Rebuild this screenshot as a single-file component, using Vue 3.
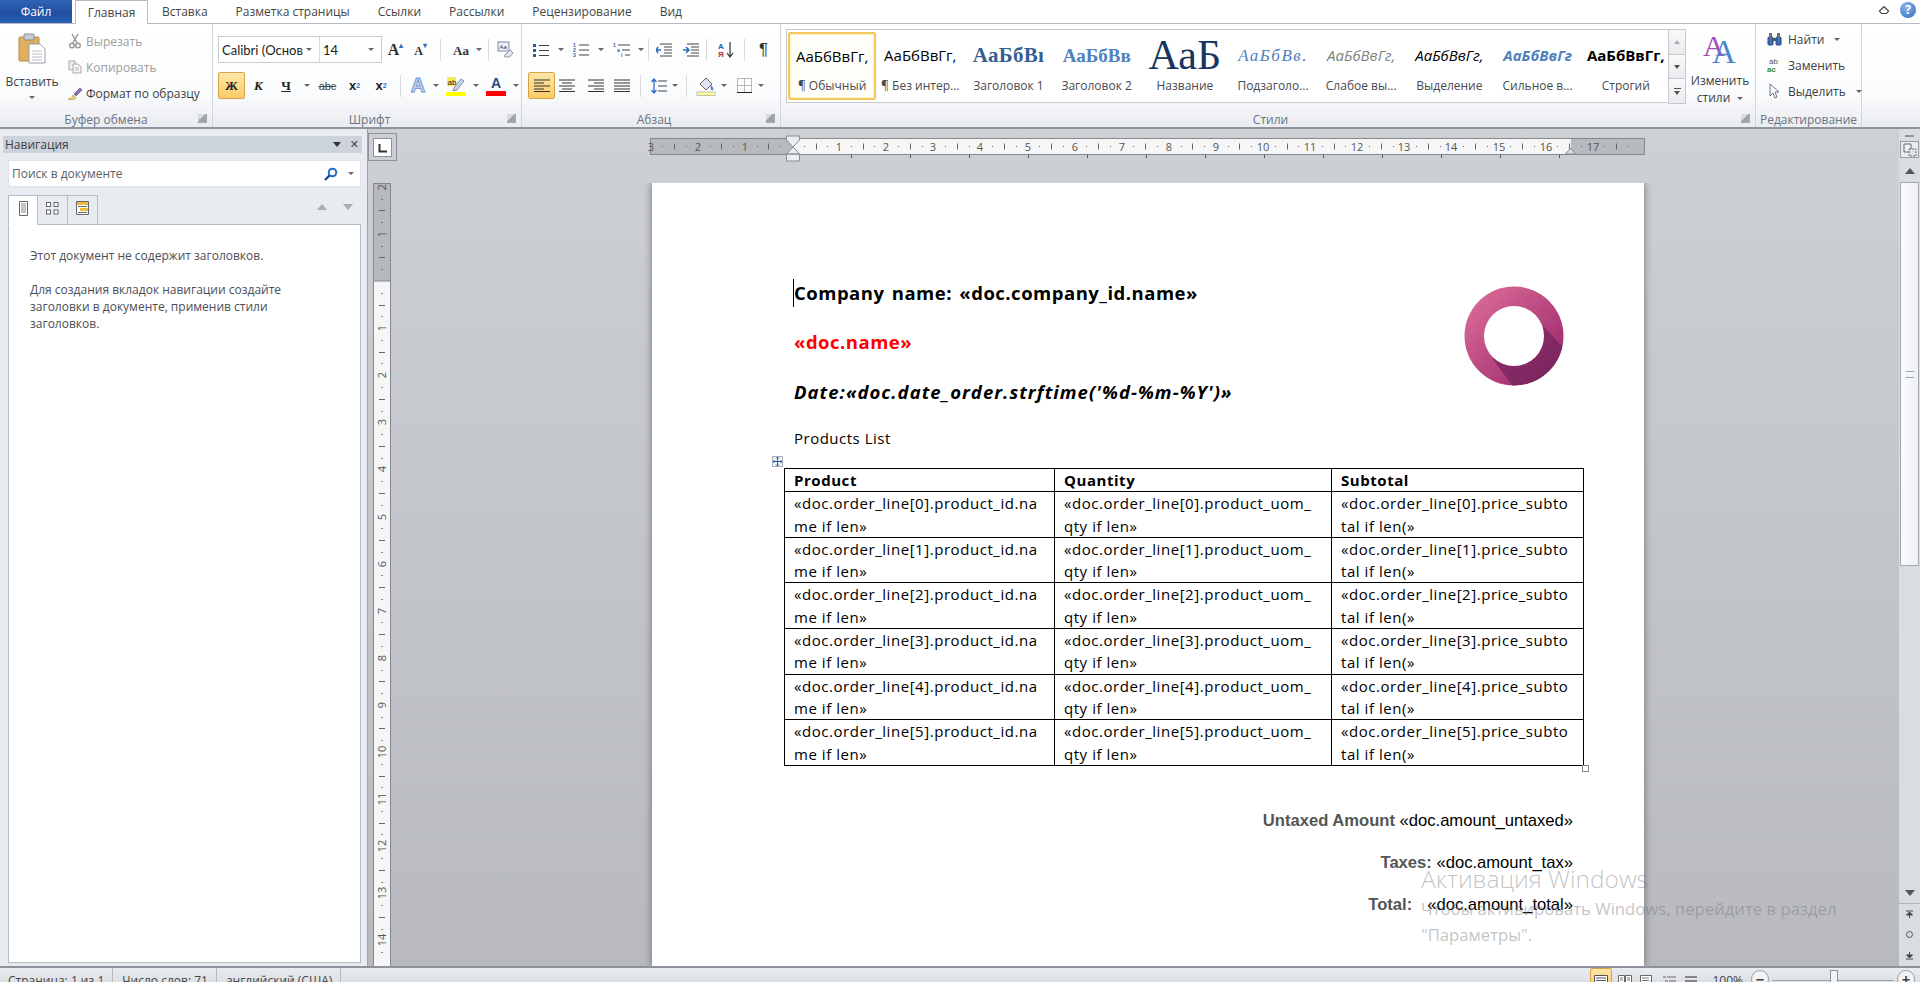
<template>
  <div class="word">
    <!-- вкладки -->
    <div class="tabs">
      <div class="file-tab">Файл</div>
      <div class="tab active">Главная</div>
      <div class="tab" v-for="t in tabs" :key="t">{{ t }}</div>
      <div class="tabs-right">
        <svg width="12" height="10" viewBox="0 0 12 10"><path d="M1.5 6 6 1.5 10.5 6 8.5 8.5h-5z" fill="none" stroke="#444" stroke-width="1.2"/></svg>
        <div class="help">?</div>
      </div>
    </div>

    <!-- лента -->
    <div class="ribbon">
      <div class="group g-clip">
        <div class="clip-body">
          <div class="paste">
            <svg width="28" height="31" viewBox="0 0 28 31">
              <rect x="1" y="4" width="20" height="24" rx="1" fill="#e0ae5f" stroke="#b58a48"/>
              <rect x="6" y="1" width="10" height="6" rx="1" fill="#c9ccd2" stroke="#8b8f96"/>
              <path d="M11 11h11l5 5v14H11z" fill="#fff" stroke="#9aa0a8"/>
              <path d="M14 18h10M14 21h10M14 24h10M14 27h10" stroke="#b7bcc4"/>
            </svg>
            <span class="paste-label">Вставить</span>
            <i class="arrow"></i>
          </div>
          <div class="clip-list">
            <div class="clip-item off">
              <svg width="14" height="16" viewBox="0 0 14 16"><path d="M4 1l5 9M10 1L5 10" stroke="#9a9a9a" stroke-width="1.5"/><circle cx="4" cy="12.5" r="2.3" fill="none" stroke="#9a9a9a" stroke-width="1.4"/><circle cx="10" cy="12.5" r="2.3" fill="none" stroke="#9a9a9a" stroke-width="1.4"/></svg>
              Вырезать
            </div>
            <div class="clip-item off">
              <svg width="14" height="14" viewBox="0 0 14 14"><path d="M1 1h6v9H1z" fill="#eee" stroke="#aaa"/><path d="M5 4h5l3 3v6H5z" fill="#f4f4f4" stroke="#aaa"/><path d="M7 8h4M7 10h4" stroke="#bbb"/></svg>
              Копировать
            </div>
            <div class="clip-item">
              <svg width="16" height="15" viewBox="0 0 16 15"><path d="M1 13c3 0 4-1 5-4l3 3c-2 2-5 2-8 1z" fill="#efd27c" stroke="#b8933f" stroke-width=".7"/><path d="M7 8l6-6 2 2-6 6z" fill="#8a72b5" stroke="#5f4a8a" stroke-width=".7"/></svg>
              Формат по образцу
            </div>
          </div>
        </div>
        <div class="group-label">Буфер обмена<i class="launcher"></i></div>
      </div>

      <div class="group g-font">
        <div class="rows">
          <div class="row row-top">
            <div class="combo">
              <div class="combo-name">Calibri (Основ<i class="arrow"></i></div>
              <div class="combo-size">14<i class="arrow"></i></div>
            </div>
            <div class="cell w25 glyph-serif">A<sup class="up">▴</sup></div>
            <div class="cell w25 glyph-serif small">A<sup class="down">▾</sup></div>
            <div class="sep gap-l"></div>
            <div class="cell w24 glyph-serif aa">Aa</div><i class="arrow arrow-m"></i>
            <div class="sep gap-r"></div>
            <div class="cell w32">
              <svg width="17" height="17" viewBox="0 0 17 17"><rect x="1" y="1" width="11" height="9" fill="#eef2f8" stroke="#7f8aa0"/><text x="2.5" y="8" font-size="6" font-family="Liberation Sans" fill="#334">Aa</text><path d="M7 15l6-6 3 3-3.5 4H9z" fill="#e3e7ef" stroke="#8a93a5"/></svg>
            </div>
          </div>
          <div class="row row-bot">
            <div class="cell w27 on glyph-b">Ж</div>
            <div class="cell w27 glyph-b ital">К</div>
            <div class="cell w28 glyph-b und">Ч</div><i class="arrow arrow-s"></i>
            <div class="cell w27 strike">abc</div>
            <div class="cell w27 glyph-b sm">x<sub>2</sub></div>
            <div class="cell w26 glyph-b sm">x<sup>2</sup></div>
            <div class="sep gap-x"></div>
            <div class="cell w22 effect">A</div><i class="arrow arrow-s"></i>
            <div class="cell w26 col">
              <svg width="20" height="20" viewBox="0 0 20 20"><rect x="1" y="1" width="9" height="9" fill="#f6ea5c"/><text x="1.5" y="8.5" font-size="8" font-family="Liberation Sans" fill="#222">ab</text><path d="M8 12l7-9 3 2-7 9-4 1z" fill="#c7d3e6" stroke="#66799a" stroke-width=".8"/><rect x="0" y="16" width="20" height="4" fill="#ffff00"/></svg>
            </div><i class="arrow arrow-s"></i>
            <div class="cell w26 col">
              <span class="font-a">A</span><i class="red-bar"></i>
            </div><i class="arrow arrow-s"></i>
          </div>
        </div>
        <div class="group-label">Шрифт<i class="launcher"></i></div>
      </div>

      <div class="group g-para">
        <div class="rows">
          <div class="row row-top para-top">
            <div class="cell w26">
              <svg width="16" height="14" viewBox="0 0 16 14"><g fill="#2a5caa"><rect x="0" y="1" width="3" height="3"/><rect x="0" y="6" width="3" height="3"/><rect x="0" y="11" width="3" height="3"/></g><path d="M6 2.5h10M6 7.5h10M6 12.5h10" stroke="#444"/></svg>
            </div><i class="arrow arrow-s"></i>
            <div class="cell w26">
              <svg width="16" height="15" viewBox="0 0 16 15"><g font-size="5" font-family="Liberation Sans" font-weight="700" fill="#2a5caa"><text x="0" y="5">1</text><text x="0" y="10">2</text><text x="0" y="15">3</text></g><path d="M6 3h10M6 8h10M6 13h10" stroke="#444"/></svg>
            </div><i class="arrow arrow-s"></i>
            <div class="cell w26">
              <svg width="17" height="15" viewBox="0 0 17 15"><g font-size="5" font-family="Liberation Sans" font-weight="700" fill="#2a5caa"><text x="0" y="5">1</text><text x="4" y="10">a</text><text x="8" y="15">i</text></g><path d="M5 3h12M9 8h8M12 13h5" stroke="#444"/></svg>
            </div><i class="arrow arrow-s"></i>
            <div class="sep gap-p1"></div>
            <div class="cell w27">
              <svg width="16" height="14" viewBox="0 0 16 14"><path d="M4 1h12M8 4h8M8 7h8M8 10h8M4 13h12" stroke="#444"/><path d="M5 7H0m2-3L0 7l2 3" stroke="#2a6bc4" stroke-width="1.5" fill="none"/></svg>
            </div>
            <div class="cell w27">
              <svg width="16" height="14" viewBox="0 0 16 14"><path d="M4 1h12M8 4h8M8 7h8M8 10h8M4 13h12" stroke="#444"/><path d="M0 7h5M3 4l3 3-3 3" stroke="#2a6bc4" stroke-width="1.5" fill="none"/></svg>
            </div>
            <div class="sep gap-p2"></div>
            <div class="cell w37">
              <svg width="16" height="17" viewBox="0 0 16 17"><text x="0" y="7.5" font-size="8" font-weight="700" font-family="Liberation Sans" fill="#2a5caa">А</text><text x="0" y="16" font-size="8" font-weight="700" font-family="Liberation Sans" fill="#a33">Я</text><path d="M12 1v14M9 12l3 4 3-4" stroke="#333" stroke-width="1.2" fill="none"/></svg>
            </div>
            <div class="sep"></div>
            <div class="cell w37 pilcrow">¶</div>
          </div>
          <div class="row row-bot para-bot">
            <div class="cell w27 on">
              <svg width="16" height="13" viewBox="0 0 16 13"><path d="M0 1h16M0 4h10M0 7h16M0 10h10M0 12.5h16" stroke="#333"/></svg>
            </div>
            <div class="cell w24">
              <svg width="16" height="13" viewBox="0 0 16 13"><path d="M0 1h16M3 4h10M0 7h16M3 10h10M0 12.5h16" stroke="#333"/></svg>
            </div>
            <div class="cell w34">
              <svg width="16" height="13" viewBox="0 0 16 13"><path d="M0 1h16M6 4h10M0 7h16M6 10h10M0 12.5h16" stroke="#333"/></svg>
            </div>
            <div class="cell w18">
              <svg width="16" height="13" viewBox="0 0 16 13"><path d="M0 1h16M0 4h16M0 7h16M0 10h16M0 12.5h16" stroke="#333"/></svg>
            </div>
            <div class="sep gap-p3"></div>
            <div class="cell w24">
              <svg width="16" height="16" viewBox="0 0 16 16"><path d="M7 3h9M7 8h9M7 13h9" stroke="#444"/><path d="M3 1v14M.5 4 3 1l2.500 3M.5 12 3 15l2.500-3" stroke="#2a6bc4" stroke-width="1.300" fill="none"/></svg>
            </div><i class="arrow a-spacing"></i>
            <div class="sep gap-p4"></div>
            <div class="cell w26">
              <svg width="20" height="20" viewBox="0 0 20 20"><path d="M4 8l6-6 6 6-6 6z" fill="#dfe6f0" stroke="#666"/><path d="M15 9c2 2 3 4 2 5s-3 0-2-5z" fill="#4a80c8"/><rect x="1" y="16" width="18" height="3.500" fill="#ffff9a" stroke="#999" stroke-width=".6"/></svg>
            </div><i class="arrow a-shade"></i>
            <div class="cell w26 b-cell">
              <svg width="15" height="15" viewBox="0 0 15 15"><path d="M.5.5h14v14H.5zM7.500.5v14M.5 7.500h14" fill="none" stroke="#777" stroke-dasharray="1 1"/><path d="M0 14.500h15" stroke="#222"/></svg>
            </div><i class="arrow a-border"></i>
          </div>
        </div>
        <div class="group-label">Абзац<i class="launcher"></i></div>
      </div>

      <div class="group g-styles">
        <div class="styles-body">
          <div class="gallery">
            <div class="style-item" v-for="(s, i) in styleItems" :key="s.label" :class="{ selected: i === 0 }">
              <div class="sample" :class="s.cls">{{ s.sample }}</div>
              <div class="style-label">{{ s.label }}</div>
            </div>
          </div>
          <div class="gallery-btns">
            <div class="g-btn"><i class="tri-g off"></i></div>
            <div class="g-btn"><i class="tri-g"></i></div>
            <div class="g-btn"><i class="bar-g"></i><i class="tri-g"></i></div>
          </div>
          <div class="change-styles">
            <svg width="34" height="32" viewBox="0 0 34 32">
              <text x="0" y="24" font-size="30" font-family="Liberation Serif" fill="#a64ab5">A</text>
              <text x="9" y="31" font-size="33" font-family="Liberation Serif" fill="#4f86d0">A</text>
            </svg>
            <span>Изменить</span>
            <span>стили<i class="arrow arrow-in"></i></span>
          </div>
        </div>
        <div class="group-label">Стили<i class="launcher"></i></div>
      </div>

      <div class="group g-edit">
        <div class="edit-list">
          <div class="edit-item">
            <svg width="15" height="14" viewBox="0 0 15 14"><rect x="1" y="5" width="5" height="8" rx="1" fill="#3f6fb0" stroke="#24467a"/><rect x="9" y="5" width="5" height="8" rx="1" fill="#3f6fb0" stroke="#24467a"/><rect x="2" y="1" width="3" height="5" fill="#6f6f6f"/><rect x="10" y="1" width="3" height="5" fill="#6f6f6f"/><rect x="6" y="6" width="3" height="3" fill="#555"/></svg>
            Найти<i class="arrow arrow-in"></i>
          </div>
          <div class="edit-item">
            <svg width="15" height="16" viewBox="0 0 15 16"><text x="2" y="7" font-size="8" font-family="Liberation Sans" fill="#555">ab</text><text x="0" y="15" font-size="8" font-weight="700" font-family="Liberation Sans" fill="#2f8a3f">ac</text></svg>
            Заменить
          </div>
          <div class="edit-item">
            <svg width="15" height="16" viewBox="0 0 15 16"><path d="M3 1v12l3-3 2 5 2-1-2-5h4z" fill="#fff" stroke="#6c7687"/></svg>
            Выделить<i class="arrow arrow-in"></i>
          </div>
        </div>
        <div class="group-label edit-label">Редактирование</div>
      </div>
    </div>

    <!-- основная часть -->
    <div class="main">
      <div class="nav">
        <div class="nav-title">
          <span>Навигация</span>
          <span class="nav-ctrl"><i class="tri-black"></i><b>✕</b></span>
        </div>
        <div class="nav-search">
          <span>Поиск в документе</span>
          <span class="nav-search-r">
            <svg width="14" height="14" viewBox="0 0 14 14"><circle cx="8.500" cy="5.500" r="3.800" fill="#fff" stroke="#2a6bc4" stroke-width="2"/><path d="M5.500 8.500 1 13" stroke="#1c4a8c" stroke-width="2.400"/></svg>
            <i class="arrow"></i>
          </span>
        </div>
        <div class="nav-tabs">
          <div class="nav-tab current">
            <svg width="9" height="15" viewBox="0 0 9 15"><path d="M.5.5h8v14h-8z" fill="#fff" stroke="#666"/><path d="M2 3h5M2 5h5M2 7h5M2 9h5M2 11h5" stroke="#888"/></svg>
          </div>
          <div class="nav-tab">
            <svg width="13" height="13" viewBox="0 0 13 13"><g fill="#fff" stroke="#666"><rect x=".5" y=".5" width="4" height="4"/><rect x="8" y=".5" width="4" height="4"/><rect x=".5" y="8" width="4" height="4"/><rect x="8" y="8" width="4" height="4"/></g></svg>
          </div>
          <div class="nav-tab">
            <svg width="13" height="14" viewBox="0 0 13 14"><path d="M.5.5h12v13H.5z" fill="#fff" stroke="#666"/><rect x="1" y="1" width="11" height="3" fill="#f0b83c"/><rect x="4" y="7" width="8" height="3" fill="#f0b83c"/><path d="M2 5.500h9M2 11.500h9" stroke="#666"/></svg>
          </div>
          <div class="nav-arrows"><i class="tri-up"></i><i class="tri-down"></i></div>
        </div>
        <div class="nav-content">
          <p>Этот документ не содержит заголовков.</p>
          <p class="spaced">Для создания вкладок навигации создайте заголовки в документе, применив стили заголовков.</p>
        </div>
      </div>

      <div class="workspace">
        <div class="doc-col">
          <div class="ruler-row">
            <div class="tab-box"><div class="tab-inner"><svg width="9" height="9" viewBox="0 0 9 9"><path d="M1.500 0v7.500H9" fill="none" stroke="#333" stroke-width="2"/></svg></div></div>
            <svg class="h-ruler" width="996" height="30" viewBox="0 0 996 30">
              <rect x=".5" y="5.500" width="994" height="16" fill="#b6b9be" stroke="#85888d"/>
              <rect x="142" y="6" width="779" height="15" fill="#f6f6f7"/>
              <g v-for="m in hMarks" :key="m.x">
                <text v-if="m.label" :x="m.x" y="18" class="r-num" text-anchor="middle">{{ m.label }}</text>
                <rect v-else-if="m.big" :x="m.x" y="10.500" width="1" height="6" fill="#666"/>
                <rect v-else :x="m.x" y="13" width="1" height="1" fill="#666"/>
              </g>
              <rect v-for="x in tabStops" :key="x" :x="x" y="22" width="1" height="3" fill="#555"/>
              <path d="M136.500 3h13v4l-6.500 7-6.500-7zM136.500 21l6.500-7 6.500 7v-0zM136.500 21h13v7h-13z" fill="#eceef0" stroke="#8a8d92"/>
              <path d="M915.500 21l5-6 5 6z" fill="#d9dbde" stroke="#8a8d92"/>
            </svg>
          </div>
          <div class="doc-body">
            <svg class="v-ruler" width="18" height="784" viewBox="0 0 18 784">
              <rect x=".5" y=".5" width="17" height="783" fill="#f6f6f7" stroke="#85888d"/>
              <rect x=".5" y=".5" width="17" height="97.500" fill="#b6b9be" stroke="#85888d"/>
              <g v-for="m in vMarks" :key="m.y">
                <text v-if="m.label" class="r-num" text-anchor="middle" :transform="`translate(13 ${m.y}) rotate(-90)`">{{ m.label }}</text>
                <rect v-else-if="m.big" x="6" :y="m.y" width="6" height="1" fill="#666"/>
                <rect v-else x="8.500" :y="m.y" width="1.500" height="1" fill="#666"/>
              </g>
            </svg>
            <div class="page">
              <svg class="logo" width="100" height="100" viewBox="-50 -50 100 100">
                <defs>
                  <linearGradient id="ring" x1="0" y1="0" x2="1" y2="1">
                    <stop offset="0.1" stop-color="#d86a96"/>
                    <stop offset="0.85" stop-color="#a02c6e"/>
                  </linearGradient>
                  <linearGradient id="ringShade" x1="0" y1="0" x2="1" y2="1">
                    <stop offset="0" stop-color="#90306c"/>
                    <stop offset="1" stop-color="#6f1f56"/>
                  </linearGradient>
                  <clipPath id="ringClip"><circle r="49.500"/></clipPath>
                </defs>
                <circle r="49.500" fill="url(#ring)"/>
                <polygon clip-path="url(#ringClip)" points="30,-9 64,27 18,76 -22,22" fill="url(#ringShade)"/>
                <circle r="30" fill="#fff"/>
              </svg>
              <p class="line line-1"><i class="caret"></i>Company name: «doc.company_id.name»</p>
              <p class="line line-2">«doc.name»</p>
              <p class="line line-3">Date:«doc.date_order.strftime('%d-%m-%Y')»</p>
              <p class="products">Products List</p>
              <div class="table-wrap">
                <div class="move-handle">
                  <svg width="9" height="9" viewBox="0 0 9 9"><path d="M4.500 0v9M0 4.500h9" stroke="#2a5caa"/><path d="M3 1.500 4.500 0 6 1.500M3 7.500 4.500 9 6 7.500M1.500 3 0 4.500 1.500 6M7.500 3 9 4.500 7.500 6" fill="none" stroke="#2a5caa"/></svg>
                </div>
                <table class="orders">
                  <colgroup><col class="c1"><col class="c2"><col class="c3"></colgroup>
                  <thead>
                    <tr><th>Product</th><th>Quantity</th><th>Subtotal</th></tr>
                  </thead>
                  <tbody>
                    <tr v-for="i in 6" :key="i">
                      <td>«doc.order_line[{{ i - 1 }}].product_id.na<br>me if len»</td>
                      <td>«doc.order_line[{{ i - 1 }}].product_uom_<br>qty if len»</td>
                      <td>«doc.order_line[{{ i - 1 }}].price_subto<br>tal if len(»</td>
                    </tr>
                  </tbody>
                </table>
                <div class="resize-handle"></div>
              </div>
              <p class="amount first"><b>Untaxed Amount</b> «doc.amount_untaxed»</p>
              <p class="amount"><b>Taxes:</b> «doc.amount_tax»</p>
              <p class="amount"><b>Total:</b><span class="total-gap"></span>«doc.amount_total»</p>
            </div>
          </div>
        </div>
        <div class="vscroll">
          <i class="split-dash"></i>
          <div class="ruler-toggle">
            <svg width="14" height="14" viewBox="0 0 14 14"><path d="M1 1h7v8H1z" fill="#eef0f3" stroke="#666"/><path d="M6 6h7v7H6z" fill="#dfe3e9" stroke="#666" stroke-dasharray="2 1"/></svg>
          </div>
          <div class="sb-btn"><i class="tri-dark-up"></i></div>
          <div class="thumb"><i class="grip"></i></div>
          <div class="track"></div>
          <div class="sb-btn"><i class="tri-dark-down"></i></div>
          <div class="browse">
            <svg width="9" height="9" viewBox="0 0 9 9"><path d="M1 1h7M1.500 5 4.500 2l3 3zM4.500 5v3" fill="#444" stroke="#444"/></svg>
            <span class="dot"></span>
            <svg width="9" height="9" viewBox="0 0 9 9"><path d="M1 8h7M1.500 4l3 3 3-3zM4.500 4V1" fill="#444" stroke="#444"/></svg>
          </div>
        </div>
      </div>
    </div>

    <!-- строка состояния -->
    <div class="status">
      <span class="st-item">Страница: 1 из 1</span>
      <span class="st-item">Число слов: 71</span>
      <span class="st-item">английский (США)</span>
      <div class="st-right">
        <div class="view on"><svg width="14" height="12" viewBox="0 0 14 12"><path d="M.5.5h13v11H.5z" fill="#fff" stroke="#555"/><path d="M2 3h10M2 5.500h10M2 8h10" stroke="#555"/></svg></div>
        <div class="view"><svg width="14" height="12" viewBox="0 0 14 12"><path d="M.5.5h6v11h-6zM7.500.5h6v11h-6z" fill="#fff" stroke="#666"/><path d="M2 3h3M2 5h3M9 3h3M9 5h3" stroke="#777"/></svg></div>
        <div class="view"><svg width="14" height="12" viewBox="0 0 14 12"><path d="M.5.5h11v11H.5z" fill="#fff" stroke="#666"/><path d="M2 3h7M2 5.500h7" stroke="#777"/><circle cx="11" cy="9" r="2.500" fill="#4a9a5a"/></svg></div>
        <div class="view"><svg width="14" height="12" viewBox="0 0 14 12"><path d="M1 2h3M5 2h9M3 6h3M7 6h7M5 10h2M8 10h6" stroke="#666"/></svg></div>
        <div class="view"><svg width="14" height="12" viewBox="0 0 14 12"><path d="M1 2h12M1 6h12M1 10h12" stroke="#666" stroke-width="1.400"/></svg></div>
        <span class="zoom-val">100%</span>
        <div class="zoom-btn">−</div>
        <div class="slider"><i class="slider-thumb"></i></div>
        <div class="zoom-btn">+</div>
      </div>
    </div>

    <!-- водяной знак активации -->
    <div class="activate">
      <div class="a-title">Активация Windows</div>
      <div class="a-text">Чтобы активировать Windows, перейдите в раздел</div>
      <div class="a-text">"Параметры".</div>
    </div>
  </div>
</template>

<script setup>
const tabs = ['Вставка', 'Разметка страницы', 'Ссылки', 'Рассылки', 'Рецензирование', 'Вид']

const styleItems = [
  { label: '¶ Обычный', sample: 'АаБбВвГг,', cls: 's-normal' },
  { label: '¶ Без интер...', sample: 'АаБбВвГг,', cls: 's-normal' },
  { label: 'Заголовок 1', sample: 'АаБбВı', cls: 's-h1' },
  { label: 'Заголовок 2', sample: 'АаБбВв', cls: 's-h2' },
  { label: 'Название', sample: 'АаБ', cls: 's-title' },
  { label: 'Подзаголо...', sample: 'АаБбВв.', cls: 's-sub' },
  { label: 'Слабое вы...', sample: 'АаБбВвГг,', cls: 's-weak' },
  { label: 'Выделение', sample: 'АаБбВвГг,', cls: 's-em' },
  { label: 'Сильное в...', sample: 'АаБбВвГг', cls: 's-strong-em' },
  { label: 'Строгий', sample: 'АаБбВвГг,', cls: 's-strong' }
]

// шаг линейки — один сантиметр на экране
const CM = 47.1
const ZERO_X = 142
const ZERO_Y = 98

function buildMarks(from, to, zero) {
  const marks = []
  for (let k = from; k <= to; k++) {
    const pos = zero + CM * k
    if (k !== 0) marks.push({ pos, label: String(Math.abs(k)) })
    marks.push({ pos: pos + CM / 4, dot: true })
    marks.push({ pos: pos + CM / 2, big: true })
    marks.push({ pos: pos + (CM * 3) / 4, dot: true })
  }
  return marks
}

const hMarks = buildMarks(-3, 17, ZERO_X).map((m) => ({ ...m, x: Math.round(m.pos) }))
const vMarks = buildMarks(-2, 14, ZERO_Y)
  .filter((m) => m.pos < 780)
  .map((m) => ({ ...m, y: Math.round(m.pos) }))

// позиции табуляции по умолчанию
const tabStops = []
for (let x = ZERO_X + 59; x < 915; x += 59) tabStops.push(x)
</script>

<style>
html, body { margin: 0; padding: 0; overflow: hidden; }
</style>

<style scoped>
.word {
  height: 982px;
  width: 1920px;
  display: flex;
  flex-direction: column;
  position: relative;
  overflow: hidden;
  font-family: "Open Sans", "Noto Sans", sans-serif;
  font-size: 12px;
  color: #3c3f45;
  background: #fff;
}
i { display: block; font-style: normal; }

/* вкладки */
.tabs { height: 23px; display: flex; align-items: stretch; flex: none; background: #fff; position: relative; }
.file-tab {
  width: 72px; margin-right: 3px;
  background: linear-gradient(#2f63b4, #1f4f9f 60%, #2a63b8);
  color: #fff; display: flex; align-items: center; justify-content: center;
}
.tab { padding: 0 14px; display: flex; align-items: center; color: #444; }
.tab.active {
  padding: 0 13px; width: 73px; box-sizing: border-box; justify-content: center;
  background: #fff; border: 1px solid #b8bcc2; border-bottom: none;
  margin-right: 0; height: 24px; position: relative; z-index: 1;
}
.tabs-right { margin-left: auto; display: flex; align-items: center; gap: 10px; padding: 0 4px 4px 0; }
.help {
  width: 16px; height: 16px; border-radius: 50%;
  background: radial-gradient(circle at 40% 30%, #8db4ea, #2f6bc4);
  color: #fff; font-weight: 700; font-size: 12px; line-height: 16px; text-align: center;
}

/* лента */
.ribbon {
  height: 106px; flex: none; display: flex; box-sizing: border-box;
  border-top: 1px solid #b8bcc2; border-bottom: 2px solid #8f939a;
  background: linear-gradient(#fff, #fbfcfd 65%, #e9ecf0);
}
.group { position: relative; display: flex; flex-direction: column; border-right: 1px solid #d2d5da; box-sizing: border-box; flex: none; }
.g-clip { width: 213px; }
.g-font { width: 309px; padding-left: 5px; }
.g-para { width: 259px; padding-left: 6px; }
.g-styles { width: 975px; padding-left: 5px; }
.g-edit { width: 106px; }
.group-label {
  height: 16px; flex: none; margin-top: auto; display: flex; align-items: center; justify-content: center;
  color: #6a7482; box-sizing: border-box;
}
.launcher {
  position: absolute; right: 5px; bottom: 4px; width: 9px; height: 9px;
  border-right: 2px solid #a3a8af; border-bottom: 2px solid #a3a8af;
  box-sizing: border-box; background: linear-gradient(135deg, #d7dade 50%, #9da2a9 50%);
}
.arrow { width: 0; height: 0; border: 3px solid transparent; border-top: 3px solid #666; border-bottom: none; flex: none; }
.arrow-s { width: 0; margin: 0 4px; }
.arrow-m { margin: 0 4px 0 3px; }
.arrow-in { display: inline-block; margin-left: 7px; vertical-align: middle; }
.a-spacing { margin-left: 1px; }
.a-shade { margin-left: 2px; }
.a-border { margin-left: 1px; }
.b-cell { margin-left: 4px; }
.sep { width: 1px; height: 22px; background: #d8dade; flex: none; }

.clip-body { display: flex; flex: 1; min-height: 0; }
.paste { width: 64px; display: flex; flex-direction: column; align-items: center; padding-top: 9px; box-sizing: border-box; flex: none; }
.paste-label { margin-top: 9px; line-height: 17px; }
.paste .arrow { margin-top: 6px; }
.clip-list { padding: 4px 0 0 3px; display: flex; flex-direction: column; gap: 0; }
.clip-item { height: 26px; display: flex; align-items: center; gap: 3px; white-space: nowrap; flex: none; }
.clip-item svg { width: 16px; flex: none; }
.clip-item.off { color: #a0a0a0; }

.rows { flex: 1; }
.row { display: flex; align-items: center; }
.row-top { height: 27px; margin-top: 12px; }
.row-bot { height: 27px; margin-top: 9px; }
.combo { display: flex; width: 164px; height: 27px; box-sizing: border-box; border: 1px solid #c9ccd1; background: #fff; flex: none; margin-right: 1px; }
.combo-name, .combo-size { display: flex; align-items: center; justify-content: space-between; padding: 0 7px 0 3px; color: #222; box-sizing: border-box; font-family: "Lato", sans-serif; font-size: 13px; }
.combo-name { width: 101px; border-right: 1px solid #d7d9dd; }
.combo-size { flex: 1; }
.cell { display: flex; align-items: center; justify-content: center; height: 27px; flex: none; box-sizing: border-box; }
.w18 { width: 18px; } .w22 { width: 22px; } .w24 { width: 24px; } .w25 { width: 25px; } .w26 { width: 26px; }
.w27 { width: 27px; } .w28 { width: 28px; } .w32 { width: 32px; } .w34 { width: 34px; } .w37 { width: 37px; }
.on { background: linear-gradient(#fde7a8, #fbcb66); border: 1px solid #d7a44a; border-radius: 2px; }
.glyph-serif { font-family: "Liberation Serif", serif; font-weight: 700; font-size: 16px; color: #333; align-items: flex-end; padding-bottom: 4px; }
.glyph-serif.small { font-size: 12px; }
.glyph-serif.aa { font-size: 13px; }
.glyph-serif sup { font-size: 8px; line-height: 1; align-self: flex-start; margin-top: 6px; color: #3b6fb5; }
.gap-l { margin: 0 8px 0 7px; }
.gap-r { margin: 0 0 0 2px; }
.glyph-b { font-family: "Liberation Serif", serif; font-weight: 700; font-size: 13px; color: #222; }
.ital { font-style: italic; }
.und { text-decoration: underline; }
.strike { text-decoration: line-through; font-size: 11px; font-family: "Liberation Sans", sans-serif; color: #444; }
.sm { font-family: "Liberation Sans", sans-serif; }
.sm sub, .sm sup { font-size: 7px; color: #3b6fb5; }
.gap-x { margin: 0 6px 0 6px; }
.effect { font-family: "Liberation Sans", sans-serif; font-weight: 700; font-size: 20px; color: #c9dbf3; -webkit-text-stroke: 1px #6d96cf; }
.col { flex-direction: column; }
.font-a { font-family: "Liberation Sans", sans-serif; font-weight: 700; font-size: 14px; line-height: 16px; color: #2a4a85; }
.red-bar { width: 20px; height: 5px; background: #f00; }
.para-top { gap: 0; }
.gap-p1 { margin: 0 1px 0 0; }
.gap-p2 { margin: 0 0 0 2px; }
.pilcrow { font-size: 17px; font-family: "Liberation Sans", sans-serif; color: #333; }
.gap-p3 { margin: 0 6px 0 9px; }
.gap-p4 { margin: 0 6px 0 8px; }

/* стили */
.styles-body { display: flex; flex: 1; min-height: 0; }
.gallery {
  width: 882px; height: 74px; box-sizing: border-box; margin-top: 5px;
  border: 1px solid #c6c9ce; border-right: none; background: #fff;
  display: grid; grid-template-columns: repeat(10, 88.2px); padding: 2px 0 0 1px;
  flex: none;
}
.style-item { height: 68px; overflow: hidden; text-align: center; box-sizing: border-box; }
.style-item.selected { border: 2px solid #f3c85c; border-radius: 2px; box-shadow: inset 0 0 0 1px #fff3c8; background: #fffef8; }
.sample { height: 45px; line-height: 47px; white-space: nowrap; overflow: hidden; color: #000; margin: 0 5px; }
.style-label { line-height: 18px; color: #474a50; white-space: nowrap; }
.selected .sample { margin: 0 3px; height: 43px; line-height: 45px; }
.s-normal { font-family: "Open Sans", sans-serif; font-size: 15px; }
.s-h1 { font-family: "Liberation Serif", serif; font-weight: 700; font-size: 21px; color: #365f91; letter-spacing: .3px; }
.s-h2 { font-family: "Liberation Serif", serif; font-weight: 700; font-size: 19px; color: #4f81bd; }
.s-title { font-family: "Liberation Serif", serif; font-size: 42px; color: #17365d; }
.s-sub { font-family: "Liberation Serif", serif; font-style: italic; font-size: 17px; color: #4f81bd; letter-spacing: 1.500px; }
.s-weak { font-family: "Open Sans", sans-serif; font-style: italic; font-size: 15px; color: #808080; }
.s-em { font-family: "Open Sans", sans-serif; font-style: italic; font-size: 15px; color: #000; }
.s-strong-em { font-family: "Open Sans", sans-serif; font-style: italic; font-weight: 700; font-size: 15px; color: #4f81bd; }
.s-strong { font-family: "Open Sans", sans-serif; font-weight: 700; font-size: 15px; color: #000; }
.gallery-btns { width: 18px; margin-top: 5px; display: flex; flex-direction: column; height: 74px; flex: none; }
.g-btn { flex: 1; border: 1px solid #c6c9ce; margin-bottom: -1px; display: flex; flex-direction: column; gap: 2px; align-items: center; justify-content: center; background: linear-gradient(#f8f9fa, #e9ebee); }
.tri-g { width: 0; height: 0; border: 3px solid transparent; border-top: 4px solid #555; border-bottom: none; }
.tri-g.off { border-top: none; border-bottom: 4px solid #a9adb3; }
.bar-g { width: 7px; height: 1px; background: #555; }
.change-styles { width: 68px; display: flex; flex-direction: column; align-items: center; padding-top: 8px; box-sizing: border-box; line-height: 17px; flex: none; }
.change-styles span:first-of-type { margin-top: 8px; }

.edit-list { padding: 2px 0 0 11px; }
.edit-item { height: 26px; display: flex; align-items: center; gap: 6px; color: #3c3f45; white-space: nowrap; }
.edit-item svg { width: 15px; flex: none; }
.edit-item .arrow-in { margin-left: 4px; }
.edit-label { white-space: nowrap; }

/* основная часть */
.main { flex: 1; min-height: 0; display: flex; overflow: hidden; }
.nav { width: 368px; flex: none; background: #e8ebf0; border-right: 1px solid #9ea3aa; box-sizing: border-box; padding: 7px 6px 3px 3px; display: flex; flex-direction: column; }
.nav-title { height: 17px; background: #cdd3da; display: flex; align-items: center; justify-content: space-between; padding: 0 3px 0 2px; color: #3c3f45; flex: none; margin-right: -1px; }
.nav-ctrl { display: flex; align-items: center; gap: 9px; }
.nav-ctrl b { font-size: 11px; color: #444; font-family: "DejaVu Sans", sans-serif; }
.tri-black { width: 0; height: 0; border: 4px solid transparent; border-top: 5px solid #333; border-bottom: none; }
.nav-search { height: 27px; margin: 7px 0 0 5px; background: #fff; border: 1px solid #dfe2e7; box-sizing: border-box; display: flex; align-items: center; justify-content: space-between; padding: 0 6px 0 3px; color: #5c5f66; flex: none; }
.nav-search-r { display: flex; align-items: center; gap: 10px; }
.nav-tabs { height: 30px; margin: 8px 0 0 5px; display: flex; flex: none; margin-bottom: -1px; position: relative; z-index: 1; }
.nav-tab { width: 30px; height: 30px; box-sizing: border-box; border: 1px solid #b5bbc3; border-left: none; border-bottom: 1px solid #b5bbc3; display: flex; align-items: center; justify-content: center; padding-bottom: 4px; }
.nav-tab.current { background: #fff; border-left: 1px solid #b5bbc3; border-bottom-color: #fff; }
.nav-arrows { margin-left: auto; display: flex; gap: 16px; align-items: center; padding: 0 8px 6px 0; }
.tri-up { width: 0; height: 0; border: 5px solid transparent; border-bottom: 6px solid #a9adb3; border-top: none; }
.tri-down { width: 0; height: 0; border: 5px solid transparent; border-top: 6px solid #a9adb3; border-bottom: none; }
.nav-content { flex: 1; margin-left: 5px; background: #fff; border: 1px solid #b5bbc3; padding: 22px 60px 0 21px; box-sizing: border-box; color: #4b4e55; line-height: 17px; }
.nav-content p { margin: 0; }
.nav-content .spaced { margin-top: 17px; }

.workspace { flex: 1; display: flex; min-width: 0; background: linear-gradient(#cdd0d5, #b8babf); }
.doc-col { flex: 1; min-width: 0; display: flex; flex-direction: column; }
.ruler-row { height: 54px; flex: none; display: flex; align-items: flex-start; padding-top: 4px; box-sizing: border-box; }
.tab-box { width: 29px; height: 28px; box-sizing: border-box; border: 1px solid #8f9399; display: flex; align-items: center; justify-content: center; flex: none; }
.tab-inner { width: 19px; height: 19px; box-sizing: border-box; border: 1px solid #8f9399; background: #fff; display: flex; align-items: center; justify-content: center; padding-top: 2px; }
.h-ruler { margin-left: 253px; flex: none; overflow: visible; }
.r-num { font-family: "Open Sans", sans-serif; font-size: 11px; fill: #555; }
.doc-body { flex: 1; min-height: 0; display: flex; overflow: hidden; }
.v-ruler { margin-left: 5px; flex: none; }
.page {
  position: relative; width: 992px; margin-left: 261px; flex: none; background: #fff;
  box-shadow: 0 0 7px 1px rgba(70, 72, 78, .55);
  box-sizing: border-box; padding: 96px 71px 0 142px;
  color: #000;
  font-family: "Open Sans", sans-serif;
}
.logo { position: absolute; left: 812px; top: 103px; }
.page p { margin: 0; }
.line { font-weight: 700; font-size: 18.500px; line-height: 28px; white-space: nowrap; position: relative; letter-spacing: .5px; }
.line-1 { word-spacing: 2px; }
.caret { position: absolute; left: -1px; top: 0; width: 1px; height: 28px; background: #000; }
.line-2 { color: #f00; margin-top: 21px !important; }
.line-3 { font-style: italic; letter-spacing: 1.050px; margin-top: 22px !important; }
.products { font-size: 15px; line-height: 20px; letter-spacing: .5px; margin-top: 22px !important; }
.table-wrap { position: relative; margin: 20px 0 0 -10px; width: 800px; }
.move-handle { position: absolute; left: -12px; top: -12px; width: 11px; height: 11px; box-sizing: border-box; border: 1px solid #a9adb3; background: #f4f5f7; display: flex; align-items: center; justify-content: center; }
.resize-handle { position: absolute; right: -5px; bottom: -6px; width: 5px; height: 5px; border: 1px solid #888; background: #fff; }
.orders { border-collapse: collapse; table-layout: fixed; width: 799px; font-size: 15px; line-height: 22.300px; letter-spacing: .55px; }
.c1 { width: 270px; } .c2 { width: 277px; } .c3 { width: 252px; }
.orders th, .orders td { border: 1px solid #000; padding: 0 9px; text-align: left; white-space: nowrap; overflow: hidden; vertical-align: top; }
.orders th { font-weight: 700; height: 22px; }
.orders td { height: 44px; }
.amount { font-family: "Liberation Sans", Arial, sans-serif; font-size: 16.600px; line-height: 20px; text-align: right; margin-top: 22px !important; white-space: nowrap; }
.amount b { color: #555; }
.amount.first { margin-top: 45px !important; }
.total-gap { display: inline-block; width: 15px; }

/* полоса прокрутки */
.vscroll { width: 21px; flex: none; background: #d9dce1; display: flex; flex-direction: column; align-items: stretch; }
.split-dash { width: 9px; height: 2px; background: #8f939a; margin: 6px auto 4px; flex: none; }
.ruler-toggle { height: 17px; border: 1px solid #9a9ea5; box-sizing: border-box; display: flex; align-items: center; justify-content: center; flex: none; margin: 0 1px; background: #e9ebee; }
.sb-btn { height: 18px; flex: none; display: flex; align-items: center; justify-content: center; margin-top: 4px; }
.tri-dark-up { width: 0; height: 0; border: 5px solid transparent; border-bottom: 6px solid #555; border-top: none; }
.tri-dark-down { width: 0; height: 0; border: 5px solid transparent; border-top: 6px solid #555; border-bottom: none; }
.thumb { height: 384px; flex: none; margin: 2px 1px 0; background: linear-gradient(90deg, #fbfbfc, #eff1f3); border: 1px solid #a5a9b0; box-sizing: border-box; display: flex; align-items: center; justify-content: center; }
.grip { width: 8px; height: 5px; border-top: 1px solid #9a9ea5; border-bottom: 1px solid #9a9ea5; position: relative; }
.track { flex: 1; }
.browse { height: 62px; flex: none; border-top: 1px solid #b0b3b9; display: flex; flex-direction: column; align-items: center; justify-content: space-around; margin-top: 1px; }
.dot { width: 5px; height: 5px; border: 1px solid #555; border-radius: 50%; }

/* строка состояния */
.status {
  height: 16px; flex: none; display: flex; overflow: hidden; box-sizing: border-box;
  border-top: 2px solid #8e929a; background: linear-gradient(#e9ecf0, #dcdfe4);
  line-height: 16px; color: #444;
}
.st-item { padding: 5px 8px 0; border-right: 1px solid #b5b8be; white-space: nowrap; margin-right: 1px; height: 30px; }
.st-right { margin-left: auto; display: flex; align-items: flex-start; padding-right: 5px; }
.view { width: 22px; height: 20px; display: flex; justify-content: center; padding-top: 7px; box-sizing: border-box; flex: none; }
.view.on { background: linear-gradient(#fde7a8, #fbcb66); border: 1px solid #d7a44a; margin-right: 2px; padding-top: 6px; }
.zoom-val { margin: 5px 8px 0 10px; white-space: nowrap; }
.zoom-btn { width: 18px; height: 18px; border-radius: 50%; border: 1px solid #9a9ea5; box-sizing: border-box; background: #f3f4f6; text-align: center; font-size: 15px; line-height: 16px; font-weight: 700; color: #444; flex: none; margin: 2px 0 0; }
.slider { width: 122px; height: 1px; background: #a0a3a9; margin: 12px 3px 0; position: relative; flex: none; }
.slider-thumb { position: absolute; left: 58px; top: -10px; width: 8px; height: 20px; border: 1px solid #8f939a; background: #f2f3f5; box-sizing: border-box; }

/* водяной знак */
.activate { position: absolute; left: 1421px; top: 863px; color: rgba(120, 120, 124, .45); pointer-events: none; white-space: nowrap; }
.a-title { font-size: 24.500px; line-height: 32px; font-weight: 300; font-family: "Open Sans", sans-serif; }
.a-text { font-size: 16.700px; line-height: 25px; margin-top: 1px; }
</style>
